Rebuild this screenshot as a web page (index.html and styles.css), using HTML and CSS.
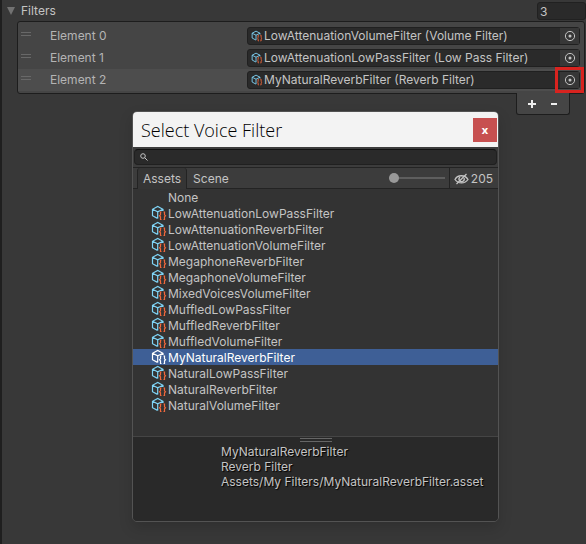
FILE: index.html
```html
<!DOCTYPE html>
<html lang="en">
<head>
<meta charset="utf-8">
<title>Select Voice Filter</title>
<link rel="stylesheet" href="styles.css">
</head>
<body>
<svg class="defs" aria-hidden="true">
  <symbol id="asset" viewBox="0 0 16 16">
    <path class="cube" d="M6.500 13.400 1.500 10.700V4.300L6.700 1.500l5.300 2.800V6M1.500 4.300l5.200 2.600L12 4.300M6.700 6.900v6.500"/>
    <path class="brace" d="M10.500 7h-1v2.800l-1 1 1 1v2.700h1M12.500 7h1v2.800l1 1-1 1v2.700h-1"/>
  </symbol>
  <symbol id="target" viewBox="0 0 12 12">
    <circle cx="6" cy="6" r="4.600" fill="none" stroke="currentColor"/>
    <circle cx="6" cy="6" r="1.500" fill="currentColor"/>
  </symbol>
</svg>
<main class="inspector">
  <header class="foldout">
    <button class="toggle" type="button"><svg class="arrow" viewBox="0 0 10 8"><path d="M1 0h8L5 8z"/></svg>Filters</button>
    <input class="count" type="text" value="3" aria-label="Size">
  </header>
  <section class="elements">
    <div class="element">
      <span class="grip"></span><span class="label">Element 0</span>
      <div class="field"><svg class="mini"><use href="#asset"/></svg><span class="value">LowAttenuationVolumeFilter (Volume Filter)</span><button class="pick" type="button" aria-label="Select"><svg><use href="#target"/></svg></button></div>
    </div>
    <div class="element">
      <span class="grip"></span><span class="label">Element 1</span>
      <div class="field"><svg class="mini"><use href="#asset"/></svg><span class="value">LowAttenuationLowPassFilter (Low Pass Filter)</span><button class="pick" type="button" aria-label="Select"><svg><use href="#target"/></svg></button></div>
    </div>
    <div class="element current">
      <span class="grip"></span><span class="label">Element 2</span>
      <div class="field"><svg class="mini"><use href="#asset"/></svg><span class="value">MyNaturalReverbFilter (Reverb Filter)</span><button class="pick marked" type="button" aria-label="Select"><svg><use href="#target"/></svg></button></div>
    </div>
  </section>
  <footer class="actions">
    <button type="button" aria-label="Add"><svg viewBox="0 0 10 10"><path d="M5 1v8M1 5h8"/></svg></button>
    <button type="button" aria-label="Remove"><svg viewBox="0 0 10 10"><path d="M2 5h6"/></svg></button>
  </footer>
</main>

<section class="dialog" role="dialog" aria-labelledby="title">
  <header class="titlebar"><h1 id="title">Select Voice Filter</h1><button class="close" type="button">x</button></header>
  <div class="search">
    <svg viewBox="0 0 8 8"><circle cx="3" cy="3" r="2.300"/><path d="M4.700 4.700 7.500 7.500"/></svg>
    <input type="text" aria-label="Search">
  </div>
  <nav class="tabs">
    <button class="tab active" type="button">Assets</button>
    <button class="tab" type="button">Scene</button>
    <input class="zoom" type="range" min="0" max="100" value="0" aria-label="Icon size">
    <button class="hidden-count" type="button"><svg viewBox="0 0 15 12"><path d="M1 6.500C3.500 1.500 11 1.500 14 6.500 11 11 4 11 1 6.500z"/><path d="M6 4a2.600 2.600 0 1 0 4 1"/><path d="M2.500 11 12.500 1"/></svg>205</button>
  </nav>
  <ul class="assets">
    <li>None</li>
    <li><svg><use href="#asset"/></svg>LowAttenuationLowPassFilter</li>
    <li><svg><use href="#asset"/></svg>LowAttenuationReverbFilter</li>
    <li><svg><use href="#asset"/></svg>LowAttenuationVolumeFilter</li>
    <li><svg><use href="#asset"/></svg>MegaphoneReverbFilter</li>
    <li><svg><use href="#asset"/></svg>MegaphoneVolumeFilter</li>
    <li><svg><use href="#asset"/></svg>MixedVoicesVolumeFilter</li>
    <li><svg><use href="#asset"/></svg>MuffledLowPassFilter</li>
    <li><svg><use href="#asset"/></svg>MuffledReverbFilter</li>
    <li><svg><use href="#asset"/></svg>MuffledVolumeFilter</li>
    <li class="selected"><svg><use href="#asset"/></svg>MyNaturalReverbFilter</li>
    <li><svg><use href="#asset"/></svg>NaturalLowPassFilter</li>
    <li><svg><use href="#asset"/></svg>NaturalReverbFilter</li>
    <li><svg><use href="#asset"/></svg>NaturalVolumeFilter</li>
  </ul>
  <div class="preview">
    <span class="splitter"></span>
    <p>MyNaturalReverbFilter<br>Reverb Filter<br>Assets/My Filters/MyNaturalReverbFilter.asset</p>
  </div>
</section>
</body>
</html>
```
FILE: styles.css
```css
* { box-sizing: border-box; }
body {
  margin: 0;
  min-height: 100vh;
  background: #383838;
  border-left: 2px solid #1f1f1f;
  color: #c4c4c4;
  font: 12px/16px Inter, "Liberation Sans", sans-serif;
}
button, input { font: inherit; color: inherit; margin: 0; padding: 0; border: 0; background: none; }
button { display: flex; align-items: center; justify-content: center; }
svg { display: block; flex: none; fill: none; }
.defs { position: absolute; width: 0; height: 0; }
.cube { fill: none; stroke: var(--cube, #7fd3f5); stroke-width: 1.2; }
.brace { fill: none; stroke: var(--brace, #f0683c); stroke-width: 1.2; }

.foldout { display: flex; justify-content: space-between; height: 21px; }
.toggle { gap: 5px; padding-left: 4px; }
.arrow { width: 10px; height: 8px; fill: #727272; }
.count {
  width: 49px; height: 18px; margin-top: 2px; padding-left: 2px;
  background: #2a2a2a; border: 1px solid #212121; border-radius: 3px;
}
.elements {
  margin: 0 1px 0 15px; padding: 3px 0 2px;
  background: #454545; border: 1px solid #1d1d1d; border-radius: 3px;
}
.element { display: flex; align-items: center; height: 22px; padding-right: 4px; }
.current { background: #4d4d4d; }
.grip { width: 10px; height: 4px; margin: 0 19px 4px 3px; border: solid #686868; border-width: 1px 0; }
.label { flex: 0 0 197px; color: #b4b4b4; }
.field {
  flex: 1; display: flex; align-items: center; height: 18px; padding-left: 3px;
  background: #2a2a2a; border: 1px solid #202020; border-radius: 3px;
}
.mini { width: 12px; height: 12px; margin-right: 1px; }
.value { flex: 1; white-space: nowrap; }
.pick { width: 19px; height: 16px; background: #373737; }
.pick svg { width: 12px; height: 12px; }
.marked { outline: 3px solid #d8231f; outline-offset: 2px; }
.actions {
  display: flex; justify-content: center; gap: 2px; width: 54px; height: 22px;
  margin: -1px 16px 0 auto;
  background: #454545; border: 1px solid #1d1d1d; border-top: 0; border-radius: 0 0 3px 3px;
}
.actions button { width: 20px; }
.actions svg { width: 10px; height: 10px; stroke: #eee; stroke-width: 2; }

.dialog {
  position: absolute; top: 111px; left: 132px; right: 87px;
  overflow: hidden; background: #3c3c3c;
  border: 1px solid #535353; border-radius: 5px;
  box-shadow: 0 6px 14px rgba(0, 0, 0, .15);
}
.titlebar { display: flex; justify-content: space-between; align-items: center; height: 35px; padding: 0 1px 0 8px; background: #f3f3f3; }
h1 { margin: 0; color: #000; font: 300 18px/24px "Open Sans", "Noto Sans", sans-serif; }
.close { width: 24px; height: 24px; background: #c75050; color: #fff; font: bold 11px/16px "Open Sans", sans-serif; }
.search {
  display: flex; align-items: center; height: 16px; margin: 2px 1px; padding: 0 5px;
  background: #2a2a2a; border: 1px solid #202020; border-top-color: #101010; border-radius: 4px;
}
.search svg { width: 8px; height: 8px; stroke: #c4c4c4; }
.search input { flex: 1; height: 14px; outline: 0; }
.tabs { display: flex; align-items: stretch; height: 22px; border: solid #232323; border-width: 1px 0; }
.tab { padding: 2px 6px 0; }
.active { margin: 0 0 -1px 4px; padding: 1px 5px 0; background: #353535; border: solid #232323; border-width: 0 1px; border-radius: 3px 3px 0 0; }
.zoom { appearance: none; width: 56px; margin: 0 4px 0 auto; background: linear-gradient(#5e5e5e, #5e5e5e) center / 100% 2px no-repeat; }
.zoom::-webkit-slider-thumb { appearance: none; width: 10px; height: 10px; border-radius: 50%; background: #999; }
.hidden-count { gap: 2px; padding: 1px 5px 0 4px; border-left: 1px solid #232323; }
.hidden-count svg { width: 15px; height: 12px; stroke: #c4c4c4; stroke-width: 1.3; }
.assets { height: 247px; margin: 0; padding: 0; background: #333; list-style: none; }
.assets li { display: flex; height: 16px; padding-left: 18px; line-height: 18px; }
.assets li:first-child { padding-left: 35px; }
.assets svg { width: 16px; height: 16px; margin-right: 1px; }
.selected { --cube: #fff; --brace: #fff; background: #3e5f96; color: #fff; }
.preview { height: 85px; padding-top: 1px; background: #292929; border-top: 1px solid #454545; }
.splitter { display: block; width: 32px; height: 4px; margin: 0 auto; border: solid #666; border-width: 1px 0; }
.preview p { margin: 2px 0 0 88px; line-height: 15px; text-shadow: 1px 1px 1px #000; }
```
